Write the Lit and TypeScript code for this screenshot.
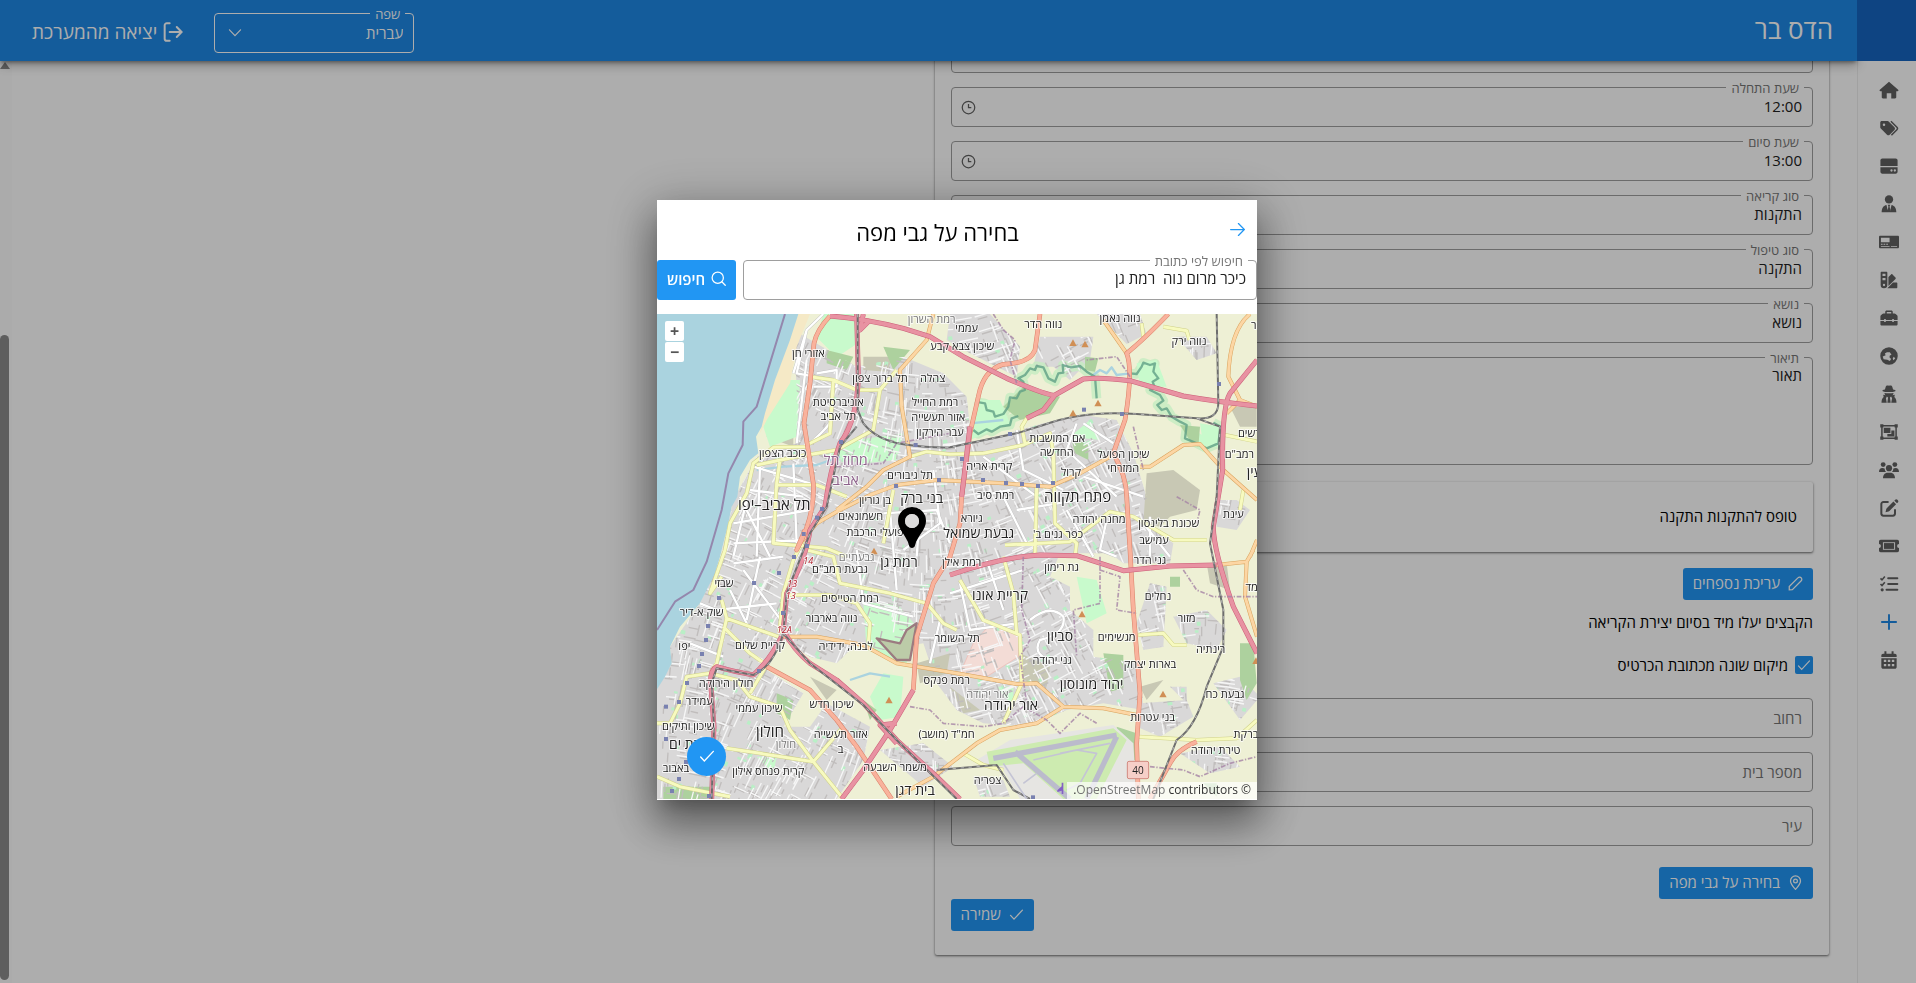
import { LitElement, html, css, svg, TemplateResult } from "lit";
import { customElement, property } from "lit/decorators.js";

/* ---------- icons ---------- */

const SOLID: Record<string, TemplateResult> = {
  home: svg`<path d="M12 2.2 23 11.6c.7.7.3 1.8-.7 1.8h-1.6v7.4c0 .8-.6 1.4-1.4 1.4h-4.6v-6.4h-5.4v6.4H4.7c-.8 0-1.4-.6-1.4-1.4v-7.4H1.7c-1 0-1.4-1.1-.7-1.8z"/>`,
  tags: svg`<path fill-rule="evenodd" d="M1.5 5.5c0-1 .8-1.8 1.8-1.8h7c.6 0 1.2.2 1.6.7l6.6 6.7c.9.9.9 2.3 0 3.2l-5.7 5.8c-.9.9-2.3.9-3.2 0l-7.4-7.5c-.4-.4-.7-1-.7-1.600zM6 6.700a1.500 1.500 0 1 0 0 3 1.500 1.500 0 0 0 0-3z"/><path d="m14.300 4 7.200 7.200c.8.8.8 2 0 2.800l-6.600 6.800" fill="none" stroke="currentColor" stroke-width="1.800"/>`,
  drive: svg`<path d="M4 3h16c1.400 0 2.300 1 2.300 2.300V12H1.700V5.300C1.700 4 2.600 3 4 3z"/><path fill-rule="evenodd" d="M1.700 13.600h20.600V19c0 1.300-1 2.300-2.300 2.300H4c-1.300 0-2.300-1-2.300-2.300zM15 16a1.400 1.400 0 1 0 0 2.800A1.400 1.400 0 0 0 15 16zm4 0a1.400 1.400 0 1 0 0 2.800 1.400 1.400 0 0 0 0-2.800z"/>`,
  tie: svg`<circle cx="12" cy="6.500" r="5"/><path d="M9 13.200 11 22H3.200c0-4.500 1.800-8 5.800-8.800zM15 13.200 13 22h7.800c0-4.500-1.800-8-5.800-8.800zM10.500 13h3l-.8 2 1 5.200L12 22.500l-1.700-2.300 1-5.200z"/>`,
  card: svg`<path fill-rule="evenodd" d="M1.500 4.500h21c1 0 1.500.7 1.500 1.500v12c0 .9-.6 1.500-1.500 1.500h-21C.6 19.500 0 18.900 0 18V6c0-.8.6-1.500 1.500-1.500zM2.300 6.800v5.400h10.400V6.800zM2.300 14v1.200h2V14zm3.200 0v1.200h2V14zm3.200 0v1.200h2V14zm-6.400 2.800v1h10.400v-1zm12 0v1h7.400v-1z"/>`,
  swatch: svg`<path fill-rule="evenodd" d="M2 3.200C2 2.500 2.500 2 3.200 2h5.600c.7 0 1.200.5 1.200 1.200V18a4 4 0 0 1-8 0zm2.200 1.300v2.700h3.600V4.500zm0 5v2.700h3.600V9.500zM6 16.600a1.400 1.400 0 1 0 0 2.800 1.400 1.400 0 0 0 0-2.800z"/><path d="m11.300 8.500 3.200-3.200c.5-.5 1.200-.5 1.700 0l3.600 3.700c.5.500.5 1.200 0 1.700l-8.500 8.600z"/><path d="M16.800 15h4c.7 0 1.200.5 1.200 1.200v4.600c0 .7-.5 1.200-1.200 1.200H10z"/>`,
  tools: svg`<path fill-rule="evenodd" d="M7.500 6.500V4.600c0-1 .7-1.700 1.700-1.700h5.600c1 0 1.700.7 1.700 1.700v1.900h2c.6 0 1.100.2 1.500.6l1.700 1.700c.4.400.6.900.6 1.500v4h-4.500v-1h-1.900v1H8.100v-1H6.200v1H1.700v-4c0-.6.200-1.100.6-1.500L4 7.100c.4-.4.900-.6 1.500-.6zm1.800 0h5.400V4.700H9.300z"/><path d="M1.700 15.500h4.500v1.300h1.900v-1.300h7.800v1.300h1.900v-1.300h4.500v4c0 .9-.7 1.600-1.600 1.600H3.300c-.9 0-1.600-.7-1.600-1.600z"/>`,
  globe: svg`<path fill-rule="evenodd" d="M12 1.500a10.500 10.500 0 1 1 0 21 10.500 10.500 0 0 1 0-21zM9.500 7.500 7 9l1 2-3.500 1.600 1 3.400 4.500.5 3 1.500 1.500-2.500-2-2 .5-2 2-1-2-3zM17.800 13l-1.300 1.600.6 2.400 2.400-2z"/>`,
  secret: svg`<path d="M8 3.500C8.600 2 9.500 1.500 12 2c2.500-.5 3.400 0 4 1.500l.9 3C18.900 7 20 7.400 20 8c0 1-3.500 1.700-8 1.700S4 9 4 8c0-.6 1.100-1 3.100-1.500z"/><path d="M6.500 10.800c3.200.5 7.800.5 11 0-.2 1.400-.8 2.200-1.700 2.700L19 13l-.6 2.600c1.700 1.200 2.600 3.400 2.600 6.900h-6.300l1-5.500-1.200-2-1.400 1.200.9 6.300h-4l.9-6.300L9.500 15l-1.200 2 1 5.500H3c0-3.500.9-5.700 2.600-6.900L5 13l3.200.5c-.9-.5-1.500-1.300-1.700-2.700z"/>`,
  group: svg`<path d="M3.500 4.600h17v14.800h-17z" fill="none" stroke="currentColor" stroke-width="1.800"/><path d="M1.500 2.700h3.800v3.800H1.500zM18.700 2.700h3.800v3.800h-3.800zM1.500 17.500h3.800v3.800H1.500zM18.700 17.500h3.800v3.800h-3.800zM5.700 7h8v6.300h-8zM14.800 10.300h3.700v7H10v-2.800h4.800z"/>`,
  users: svg`<circle cx="5" cy="5.500" r="2.900"/><circle cx="19" cy="5.500" r="2.900"/><circle cx="12" cy="9.800" r="3.700"/><path d="M0 14.300c0-3 1.500-4.800 4-4.800 1.300 0 2.300.3 3 .9-.2 1.600.3 3 1.500 3.900zM24 14.300c0-3-1.500-4.800-4-4.800-1.300 0-2.300.3-3 .9.200 1.600-.3 3-1.500 3.900zM4.800 21.800c0-4 2.300-6.500 5.500-6.500h3.400c3.200 0 5.500 2.500 5.500 6.500z"/>`,
  edit: svg`<path d="M11.500 4.800H5.300A2.500 2.500 0 0 0 2.800 7.300v11.400a2.500 2.500 0 0 0 2.500 2.500h11.400a2.500 2.500 0 0 0 2.500-2.500v-5.200" fill="none" stroke="currentColor" stroke-width="2.400"/><path d="m17.300 4.300 3.200 3.200-8 8c-.3.3-.6.5-1 .6l-3.700.9.9-3.700c.1-.4.300-.7.600-1zM18.400 3.200l1-1c.8-.8 2-.8 2.700 0l.5.500c.8.800.8 2 0 2.700l-1 1z"/>`,
  ticket: svg`<path fill-rule="evenodd" d="M2 4.500h20c1.100 0 2 .9 2 2v3.200a2.300 2.300 0 0 0 0 4.600v3.200c0 1.100-.9 2-2 2H2c-1.100 0-2-.9-2-2v-3.200a2.300 2.300 0 0 0 0-4.600V6.500c0-1.100.9-2 2-2zm2.700 2.900v9.200h14.600V7.400z"/><path d="M5.900 8.500h12.200v7H5.900z"/>`,
  list: svg`<path d="M11 5.200h11M11 12h11M9 19h13" fill="none" stroke="currentColor" stroke-width="2.400" stroke-linecap="round"/><path d="m1.800 5.200 1.800 1.900 3.400-4M1.800 12l1.800 1.900 3.400-4" fill="none" stroke="currentColor" stroke-width="1.900"/><circle cx="3.800" cy="19" r="1.900"/>`,
  plus: svg`<path d="M12 3.500v17M3.500 12h17" fill="none" stroke="currentColor" stroke-width="2.300" stroke-linecap="round"/>`,
  calendar: svg`<path d="M6.500 1.500h2.400v3h6.200v-3h2.400v3H19c1.200 0 2.200 1 2.200 2.200v1.800H2.800V6.700c0-1.200 1-2.200 2.200-2.200h1.500z"/><path fill-rule="evenodd" d="M2.800 9.800h18.400v10.500c0 1.200-1 2.200-2.200 2.200H5c-1.200 0-2.200-1-2.200-2.200zm3 2v2.700h2.900v-2.700zm4.800 0v2.700h2.900v-2.700zm4.800 0v2.700h2.900v-2.700zm-9.600 5v2.700h2.900v-2.700zm4.800 0v2.700h2.900v-2.700zm4.800 0v2.700h2.900v-2.700z"/>`,
};

const LINE: Record<string, TemplateResult> = {
  clock: svg`<circle cx="12" cy="12" r="10"/><path d="M12 6.500V12h4.500"/>`,
  chevron: svg`<path d="m2.500 6.500 9.500 10 9.500-10"/>`,
  logout: svg`<path d="M8 1.500H4.500a2.500 2.500 0 0 0-2.500 2.500v16a2.500 2.500 0 0 0 2.500 2.500H8M8 12h14M16.500 6l5.800 6-5.800 6"/>`,
  arrow: svg`<path d="M1 12h22M13.500 2.500 23 12l-9.500 9.500"/>`,
  search: svg`<circle cx="10.800" cy="10.800" r="9"/><path d="m17.300 17.300 5.500 5.500"/>`,
  pencil: svg`<path d="M2 22v-5.200L15.800 3c2-2.200 4.200-1.400 5.200-.2 1.200 1.200 1.800 3.300-.2 5.300L7 21.800z"/>`,
  marker: svg`<path d="M12 23C7 17.500 4 13.500 4 9.500a8 8 0 0 1 16 0c0 4-3 8-8 13.500z"/><circle cx="12" cy="9.500" r="3"/>`,
  check: svg`<path d="m2.500 13.500 5.500 6L21.500 5"/>`,
};

const solid = (name: string) =>
  html`<svg class="solid" viewBox="0 0 24 24" aria-hidden="true">${SOLID[name]}</svg>`;
const line = (name: string) =>
  html`<svg class="line" viewBox="0 0 24 24" aria-hidden="true">${LINE[name]}</svg>`;

/* ---------- outlined text field ---------- */

const UI_FONT = css`"Open Sans", "Noto Sans", "Liberation Sans", sans-serif`;

@customElement("outlined-field")
export class OutlinedField extends LitElement {
  @property() label = "";
  @property() value = "";
  @property() icon = "";
  @property({ type: Boolean }) multiline = false;
  @property({ type: Boolean }) placeholder = false;

  static styles = css`
    :host {
      display: block;
    }
    .box {
      position: relative;
      display: flex;
      align-items: center;
      box-sizing: border-box;
      min-height: 40px;
      border: 1px solid #9e9e9e;
      border-radius: 4px;
    }
    label {
      position: absolute;
      top: -8px;
      right: 8px;
      padding: 0 5px;
      background: #fff;
      color: #757575;
      font: 13px/16px ${UI_FONT};
    }
    input,
    textarea {
      flex: 1;
      min-width: 0;
      box-sizing: border-box;
      margin: 0;
      padding: 0 10px;
      border: 0;
      outline: 0;
      background: none;
      color: #212121;
      font: 15px/20px ${UI_FONT};
      resize: none;
    }
    input {
      height: 38px;
    }
    label + input {
      padding-bottom: 3px;
    }
    textarea {
      height: 106px;
      padding-top: 7px;
    }
    input::placeholder {
      color: #757575;
      opacity: 1;
    }
    .line {
      width: 15px;
      height: 15px;
      margin-left: 9px;
      fill: none;
      stroke: #616161;
      stroke-width: 2;
    }
  `;

  render() {
    const floating = this.label && !this.placeholder;
    return html`<div class="box">
      ${floating ? html`<label for="control">${this.label}</label>` : ""}
      ${this.multiline
        ? html`<textarea id="control" .value=${this.value}></textarea>`
        : html`<input
            id="control"
            type="text"
            aria-label=${this.label}
            .value=${this.value}
            placeholder=${this.placeholder ? this.label : ""}
          />`}
      ${this.icon ? line(this.icon) : ""}
    </div>`;
  }
}

/* ---------- street map ---------- */

type Label = [text: string, x: number, y: number, kind?: string];

const LABELS: Label[] = [
  ["אזורי חן", 475, 128], ["רמת השרון", 845, 28, "dim"], ["תל ברוך צפון", 690, 205],
  ["צהלה", 848, 203], ["אוניברסיטת", 565, 275], ["תל אביב", 565, 318],
  ["רמת החייל", 855, 275], ["אזור תעשייה", 865, 322], ["עבר הירקון", 870, 365],
  ["כוכב הצפון", 398, 430], ["מחוז תל", 587, 452, "region"], ["אביב", 587, 512, "region"],
  ["תל גיבורים", 780, 495], ["בן גוריון", 675, 570], ["בני ברק", 815, 568, "town"],
  ["תל אביב–יפו", 373, 587, "city"], ["חשמונאים", 632, 617], ["פועלי הרכבת", 675, 665],
  ["גבעת שמואל", 986, 673, "town"], ["גבעתיים", 620, 742, "dim"], ["עממי", 950, 55],
  ["שיכון צבא קבע", 937, 108], ["נווה הדר", 1180, 42], ["נווה נאמן", 1410, 25],
  ["נווה ירק", 1617, 93], ["אם המושבות", 1222, 383], ["החדשה", 1220, 427],
  ["שיכון הפועל", 1420, 432], ["המזרחי", 1420, 475], ["קרית אריה", 1018, 468],
  ["קרול", 1263, 485], ["רמת סיב", 1037, 555], ["פתח תקווה", 1283, 563, "city"],
  ["גיורא", 965, 625], ["מחנה יהודה", 1347, 628], ["שכונת בלינסון", 1556, 638],
  ["כפר גנים ב'", 1224, 673], ["עמישב", 1512, 690], ["עינת", 1750, 612],
  ["רמב\"ם", 1768, 433], ["קדשים", 1808, 370], ["העין", 1826, 488, "town"],
  ["מזור", 1830, 45], ["גני הדר", 1500, 750], ["גבעת רמב\"ם", 570, 776],
  ["רמת גן", 747, 760, "town"], ["14", 475, 750, "exit"], ["13", 427, 818, "exit"],
  ["13", 422, 855, "exit"], ["12A", 403, 957, "exit"], ["שבזי", 222, 818],
  ["שוק א-דיר", 155, 905], ["רמת הטייסים", 600, 864], ["נווה בארבור", 545, 924],
  ["לבנה, ידידיה", 587, 1008], ["קריית שלום", 330, 1005], ["יפו", 103, 1008],
  ["חולון הירוקה", 228, 1120], ["עמידר", 148, 1172], ["שיכון ותיקים", 115, 1248],
  ["שיכון עממי", 327, 1195], ["שיכון חדש", 545, 1182], ["אזור תעשייה", 572, 1272],
  ["ב", 572, 1317], ["חולון", 360, 1268, "city"], ["חולון", 408, 1303, "dim"],
  ["קרית פנחס אילון", 355, 1382], ["בת ים", 105, 1305, "town"], ["באבוב", 78, 1375],
  ["משמר השבעה", 735, 1370], ["בית דגן", 795, 1443, "town"], ["תל השומר", 922, 983],
  ["רמת פנקס", 890, 1110], ["חמ\"ד (מושב)", 890, 1273], ["רמת אילן", 935, 757],
  ["גת רימון", 1235, 770], ["קריית אונו", 1050, 858, "town"], ["סביון", 1230, 980, "town"],
  ["נחלים", 1524, 858], ["מזור", 1610, 925], ["מגשימים", 1400, 980],
  ["רינתיה", 1682, 1018], ["גני יהודה", 1207, 1050], ["בארות יצחק", 1500, 1062],
  ["יהוד מונוסון", 1325, 1125, "town"], ["אור יהודה", 1012, 1153, "dim"],
  ["אור יהודה", 1083, 1187, "town"], ["גבעת כח", 1725, 1153], ["בני עטרות", 1508, 1222],
  ["ברקת", 1788, 1273], ["טירת יהודה", 1697, 1320], ["צפריה", 1013, 1410],
  ["שדה חמד", 1850, 832],
];

const CITY_AREA =
  "M430 60 620 170 760 140 880 190 950 260 965 400 1180 340 1300 315 1400 330 1450 430 1490 560 1480 640 1570 700 1560 760 1420 760 1380 730 1230 730 1200 800 1260 830 1260 900 1330 960 1330 1040 1470 1060 1480 1200 1360 1180 1250 1200 1130 1250 1000 1240 920 1200 860 1120 820 1000 700 1020 620 1000 560 1060 480 1040 400 990 350 1080 460 1150 400 1250 480 1250 530 1180 660 1250 640 1350 560 1467 21 1467 21 1135 65 1060 60 1010 150 880 210 750 250 570 320 440 440 400 440 230z";
const TOWN_AREAS =
  "M900 12H1020L1110 110 1100 200 960 130 890 90z M1170 80h160l-10 70-60 60-50-40-60 0z M1340 12h130l20 60-60 30z M1580 80h90l30 50-60 20z M1700 570l60 0 40 30-40 60-60-10z M1500 820l50 10-10 180-60 10-20-80z M1570 920l100-20 60 60-30 60-90-20z M1470 1180l140-10 20 50-100 60-70-30z M1690 1120l80-20 60 60-60 70z M1590 1330l120-20 60 60-90 20z M690 1320l130-20 90 70-90 60z M970 1400l90 10 20 50h-90z M1560 1130l50 0 0 50z";
const GREEN_AREAS =
  "M400 210h50l-10 170-80 30-20-60z M620 390 760 370 740 450 640 460 520 440z M640 880h100l60 70-30 110-120-40z M700 1090l60 10-10 120-60 10-30-70z M1460 160l60-10 30 80-80 0z M1600 340l80 50-20 20z M990 270l60 0 30 70-120 50z M1320 330l30 60-90 -10z M1650 340l60 10 0 60-50 0z M1040 1130l50 0 0 60z M320 1340l60 0-10 50z M1280 800l60 10 30 100-60 30z M520 12h100v90l-60 40-60-60z";
const FOREST_AREAS =
  "M1120 230l110 30-30 50-90 20-50-40z M1590 345l60 5-5 60-20-10z M530 120l80 20-20 40-60-20z M1265 390l50 10 0 50-40-20z M1360 1030l60 5v100l-40 10z M1400 1250l60 20v80l-50 0z M700 110l80 10-50 60z M380 1150l50 20-10 60-40-20z M640 1170l40 30-20 30z M1770 1000l40 0 10 120-30 50-20-60z M1660 1420l40 0v40z M40 1430h140v37H40z M1305 140l40 5-10 40-30-5z M1560 800l30 0 0 30-30 0z";
const SCRUB_AREAS =
  "M1490 490 1570 480 1650 540 1640 600 1560 620 1530 650 1480 640z M640 140h90l-20 45-70-5z M370 260h60v150l-80-30z M1110 1030l90 40-10 60-70-20z M1470 1130l70-20-50 60z M900 1130l90 70-50 10z M1670 760l60 0 10 80-60-20z M800 1060l100-30-10 60-80 30z M1740 290l80 0v60l-50 0z M480 1100l80 40-30 30z";
const RESERVE =
  "M970 360 985 372 1010 358 1025 365 1050 350 1080 345 1085 325 1105 318 M975 275 1005 280 1010 300 1030 305 1035 320 1060 312 1075 290 1080 262 1100 265 1110 245 1125 240 1120 215 1105 205 1125 195 1140 175 1155 180 1160 168 1180 172 1195 205 1215 215 1225 190 1240 188 1238 165 1262 172 1290 168 1310 185 1335 200 1340 265 M1440 190 1460 192 1475 170 1480 158 1500 165 1515 160 1510 185 1525 205 1508 215 1515 235 1500 240 1530 255 1540 272 1522 285 1535 300 1550 295 1565 320 1590 335 1610 345 1605 385 1640 400 1670 415 1705 400 1712 350 1690 338";

const MOTORWAYS = [
  "M620 12 625 200Q622 330 570 400Q540 480 525 590L480 660Q470 740 410 850L400 960Q430 1020 480 1060L560 1110 640 1180 740 1290 860 1400 930 1467",
  "M395 980Q360 1050 310 1095 250 1085 200 1070 180 1080 182 1120L192 1250 185 1467",
  "M540 18Q640 25 760 55L840 80 940 140 1070 205Q1200 260 1215 255L1300 207Q1350 200 1440 212L1600 258Q1700 275 1821 288",
  "M640 12 630 60 660 30",
  "M1821 150 1740 250Q1715 290 1718 480L1690 650Q1690 720 1750 890L1821 1030",
  "M1215 255 1180 300 1130 325",
  "M900 795Q1060 740 1170 735L1280 737 1420 782 1560 768 1700 765",
  "M790 1140 720 1260 640 1380 575 1467",
  "M740 1240 690 1245 740 1300",
  "M960 350 935 560",
];
const TRUNKS = [
  "M540 18Q500 60 492 100L480 220 462 340 490 520Q495 620 440 720L465 660",
  "M1170 12 1155 120Q1140 160 1060 163 1000 180 985 260L960 370 935 560 930 640 900 740 850 820 800 980 790 1140",
  "M1555 12Q1480 90 1430 130 1450 180 1425 330L1390 430Q1430 500 1430 560L1440 720 1450 900 1470 1150 1460 1300 1465 1467",
  "M350 1070 480 1140 560 1230 620 1310 660 1370 725 1467",
  "M1640 1295Q1580 1320 1560 1360L1500 1467",
];
const PRIMARIES = [
  "M850 12 830 90 750 180 755 290 780 440 700 480 650 530 560 600",
  "M450 700 500 640 560 605 660 555 740 525 860 510 1060 520 1200 530 1290 490 1380 440 M1470 470H1500L1600 405 1650 402 1720 480 1821 570",
  "M1360 30 1430 130", "M1800 12Q1740 60 1735 200L1770 270 1730 310 M1770 270 1821 290",
  "M400 980H500L640 1005 740 1060 920 1090 1100 1122 1160 1120 1240 1190 1360 1195 1460 1215",
  "M1240 1190 1160 1240 1050 1260 980 1300 850 1400 740 1460",
  "M1700 765 1790 755 1810 720 M1790 755 1785 860 1821 980 M1821 690 1800 740",
];
const SECONDARIES = [
  "M480 410 370 412 310 460 290 550 240 640 225 720 180 850 215 800",
  "M480 200 550 210 620 240 690 240 740 180 M550 210 540 370 470 405 M690 240 670 360 560 420 440 440 320 465",
  "M390 450 380 520 370 700 530 715 590 740 M380 525 500 525 590 560",
  "M460 690 430 750 400 850 388 970 M215 870 230 925 300 950 385 980 M230 925 200 1060 180 1090 110 1100 90 1180 60 1240 21 1240",
  "M220 950 300 1030 350 1065 300 1150 M180 1090 260 1110 300 1160 390 1190 420 1260 490 1355 580 1467 M230 1315 330 1330 490 1355 580 1250",
  "M21 1400 90 1430 240 1460 M400 855H540L620 880 660 940 655 1000 M470 720 550 740 570 820 720 850 830 880 880 940 920 960",
  "M780 440 830 425 900 433 1000 430 1120 405 1200 370 1210 430 1212 520 1215 640 1280 700 1275 740",
  "M1130 325 1115 350 1125 400 M1160 530 1155 740 M1065 705 1260 695 1380 605 1450 620 1570 690 1670 690",
  "M1475 40 1480 80 M1540 50 1610 62 1618 90 M930 810 1000 930 1110 975 1115 1120 1060 1240 M1060 740 1090 850 1100 970",
  "M1465 975 1540 970 1570 1005 1610 1005 M1465 1280 1640 1290 1760 1285 1821 1230 M1725 375 1821 395 M730 540 700 700 M1780 540 1770 600",
  "M940 1330 1000 1365 1060 1380",
];
const SURFACE_RAILS = [
  "M640 340Q680 390 760 403 850 415 900 412L1100 370 1180 345Q1300 300 1460 312L1640 325Q1705 330 1705 280L1700 12",
  "M1640 325 1710 350 1700 560 1680 700 1720 900 1720 1010 1670 1130Q1640 1250 1580 1290L1510 1467",
  "M860 1380 1040 1365 1090 1440 1140 1467",
];
const MEDIAN_RAILS = [
  "M623 12V300L640 340 M620 350 570 410 530 590 480 670 410 850 400 970 480 1060 640 1185 740 1290 920 1467",
  "M400 970Q370 1070 310 1095L200 1075 185 1120 192 1250 185 1467",
];
const BORDERS = [
  "M1030 12 1060 60 1095 90 1080 150 1100 220", "M1600 780 1640 840 1690 860 1821 860",
  "M1120 740 1115 900 1140 990 1110 1040 1130 1180", "M780 1190 840 1200 880 1240 1000 1250 1060 1240 1120 1190 1190 1230 1230 1270 1290 1210 1340 1240",
  "M1350 740 1350 880 1270 900 1280 1040", "M1500 1370 1600 1380 1650 1400 1740 1360 1821 1340",
  "M1440 200 1400 140 1310 150", "M1450 350 1480 480 M1580 560 1650 600 1640 640",
  "M560 470 700 460 740 400 900 370", "M1350 780 1410 800 1400 900 1460 910",
];
const MINOR_STREETS = [
  "M430 190 470 60 520 12 M470 60 440 190 550 210 M500 190 560 180V230H490 M470 150 440 400 M480 400Q560 330 540 320",
  "M270 560 360 740 M310 470 480 520 M300 540 460 560 M250 640 480 600 M290 570 250 740 M330 470 320 740 M430 460 440 700 M250 700 470 690",
  "M250 760 400 740 M200 900 380 880 M240 840 300 960 M330 740 290 930 M150 880 200 900 M280 780 400 940 M120 1000 220 1040",
  "M700 610 860 600 900 700 M720 600 740 840 M810 610 800 740 M850 480 870 640 760 720 M620 720 640 880 790 920",
  "M1000 440 1160 560 M1050 540 1130 700 M980 560 1080 540 M1100 360 1120 480 1240 540 M1300 340 1390 400 M1280 340 1250 420 1400 560 M1300 500 1480 560 M1250 600 1330 740 M1100 600 1350 560",
  "M1480 640 1560 740 M1500 620 1500 740 M1370 630 1350 720 1400 740 M900 850 1120 780 M930 820 960 960 1100 940 M1010 750 1060 900 M870 930 840 1060",
  "M1140 930Q1200 880 1240 920 1250 970 1170 990 1140 1040 1230 1060 1260 1030M1180 870Q1130 860 1150 800 M1160 780H1220V860H1130",
  "M1220 1100Q1260 1030 1390 1060 1430 1120 1390 1190 M1230 1120H1400 M1270 1050V1180 M1310 1045V1190 M1350 1050V1190 M1220 1150H1400 M1220 1080H1400",
  "M1440 800 1530 820 1540 940 M1460 890H1530 M1530 940V1020L1460 1030 M1600 1000V930L1640 910 1690 950 M1720 1200 1740 1270 M1590 1360 1700 1300",
  "M60 1170 160 1300 240 1460 M21 1300 190 1320 M90 1180 230 1210 390 1190 M230 1240 240 1420 M230 1420H600 M420 1260 600 1420 M480 1260 560 1200 660 1290 M500 1300 600 1240 M440 1320 560 1340",
  "M40 1130 70 1220 M100 940 140 1030 90 1100 M230 1060 260 980 M280 1180 260 1330 M340 1200 330 1320 M640 1400 680 1330 830 1410",
  "M880 150 930 180 M960 140Q970 90 1020 80 M1020 80Q1060 70 1070 120 L1040 160",
  "M580 250 600 330 M700 260 760 300 M720 330 800 350 M780 200 900 240 M860 240 900 400 M680 330 720 370 M500 460 520 560 M400 470 410 700 M340 620 470 640",
];
const STATIONS = [
  [573, 396], [797, 405], [867, 510], [738, 528], [516, 597], [501, 623], [461, 672], [471, 708],
  [432, 741], [387, 789], [312, 819], [207, 864], [399, 909], [174, 948], [168, 990], [156, 1032],
  [147, 1068], [327, 1083], [111, 1119], [87, 1176], [48, 1190], [48, 1287], [108, 1356], [87, 1407],
  [66, 1443], [177, 1458], [936, 447], [999, 510], [1068, 519], [1116, 522], [1164, 528], [1209, 519],
  [1080, 372], [1302, 299], [1416, 312], [1707, 222], [1149, 1462],
];
const PEAKS = [
  [1269, 98], [1305, 102], [1344, 279], [1269, 309], [672, 723], [1296, 912], [717, 1170], [1539, 1152], [1818, 1052],
];

/* Repeatable pseudo-random texture of blocks, side streets and gardens. */
function cityTexture() {
  let seed = 71;
  const next = () => (seed = (seed * 16807) % 2147483647) / 2147483647;
  let lanes = "";
  let blocks = "";
  let gardens = "";
  for (let i = 0; i < 3200; i++) {
    const x = Math.round(30 + next() * 1780);
    const y = Math.round(20 + next() * 1440);
    const a = Math.sin(x / 260) * 0.5 + (next() > 0.5 ? 1.57 : 0);
    const l = 25 + next() * 50;
    const dx = Math.round(Math.cos(a) * l);
    const dy = Math.round(Math.sin(a) * l);
    blocks += `M${x + 9} ${y + 7}l${Math.round(dx / 2)} ${Math.round(dy / 2)}`;
    if (i % 2 === 0) lanes += `M${x} ${y}l${dx} ${dy}`;
    if (i % 7 === 0) gardens += `M${x} ${y - 8}l${Math.round(dx / 5)} ${Math.round(dy / 5)}`;
  }
  return { lanes, blocks, gardens };
}
const TEXTURE = cityTexture();

@customElement("street-map")
export class StreetMap extends LitElement {
  static styles = css`
    :host {
      display: block;
      overflow: hidden;
    }
    svg {
      display: block;
      width: 100%;
      height: 100%;
      background: #eef0d5;
    }
    path {
      fill: none;
      stroke-linejoin: round;
    }
    .sea { fill: #aad3df; }
    .sand { fill: #f5e9c6; }
    .built { fill: #d9d8d8; }
    .green { fill: #c8facc; }
    .meadow { fill: #cdebb0; }
    .forest { fill: #add19e; }
    .scrub { fill: #c8c8b4; }
    .airport { fill: #e6e5e2; }
    .base { fill: #f3dcd6; stroke: #f0b8b0; stroke-width: 2; }
    .lanes { stroke: #f6f6f6; stroke-width: 4; }
    .blocks { stroke: #c0bdbc; stroke-width: 4; }
    .gardens { stroke: #b9efc6; stroke-width: 11; }
    .minor-edge { stroke: #bcbcbc; stroke-width: 9; }
    .minor { stroke: #fff; stroke-width: 7; }
    .secondary-edge { stroke: #cfd08a; stroke-width: 12; }
    .secondary { stroke: #f7fabf; stroke-width: 9; }
    .primary-edge { stroke: #d8a25c; stroke-width: 12; }
    .primary { stroke: #fcd6a4; stroke-width: 9; }
    .trunk-edge { stroke: #d98068; stroke-width: 14; }
    .trunk { stroke: #f9b29c; stroke-width: 11; }
    .motorway-edge { stroke: #cb5f78; stroke-width: 15; }
    .motorway { stroke: #e892a2; stroke-width: 12; }
    .rail { stroke: #6d6d6d; stroke-width: 6; }
    .rail-dash { stroke: #d8d8d8; stroke-width: 2; stroke-dasharray: 10 14; }
    .border { stroke: #a583a5; stroke-width: 5; stroke-dasharray: 14 5 4 5; opacity: 0.8; }
    .sea-border { stroke: #9487ad; stroke-width: 6; }
    .river { stroke: #aad3df; stroke-width: 7; }
    .bank { stroke: #c4ecc0; stroke-width: 28; opacity: 0.8; }
    .reserve { stroke: #5f9f84; stroke-width: 7; opacity: 0.8; }
    .zoo { fill: #bccba8; stroke: #9b7b80; stroke-width: 7; }
    .runway { stroke: #bbbbcc; stroke-width: 16; }
    .taxiway { stroke: #c4c4d4; stroke-width: 5; }
    .station { fill: #7981b0; }
    .peak { fill: #d08f55; }
    text {
      fill: #222;
      font: 33px "Open Sans", "Noto Sans", "Liberation Sans", sans-serif;
      text-anchor: middle;
      direction: rtl;
      paint-order: stroke;
      stroke: rgba(255, 255, 255, 0.75);
      stroke-width: 6px;
      stroke-linejoin: round;
    }
    .town { font-size: 42px; }
    .city { font-size: 45px; }
    .dim { fill: #777; }
    .region { fill: #8d618b; font-size: 42px; }
    .exit { fill: #b0202c; font-size: 27px; font-style: italic; }
    .shield { fill: #f6cfc8; stroke: #d28a80; stroke-width: 3; }
    .shield-text { font-size: 30px; stroke: none; }
    .plane { fill: #8461c4; }
  `;

  private road(kind: string, paths: string[]) {
    const d = paths.join(" ");
    return svg`<path class="${kind}-edge" d=${d}></path><path class=${kind} d=${d}></path>`;
  }

  render() {
    const rails = [...MEDIAN_RAILS, ...SURFACE_RAILS].join(" ");
    return html`<svg viewBox="21 12 1800 1455" preserveAspectRatio="xMidYMid slice" role="img" aria-label="מפה">
      <defs>
        <clipPath id="built"><path d=${CITY_AREA + " " + TOWN_AREAS}></path></clipPath>
      </defs>
      <path class="built" d=${CITY_AREA + " " + TOWN_AREAS}></path>
      <path class="scrub" d=${SCRUB_AREAS}></path>
      <path class="bank" d=${RESERVE}></path>
      <path class="green" d=${GREEN_AREAS}></path>
      <path class="forest" d=${FOREST_AREAS}></path>
      <path class="base" d="M970 1000 1010 955 1050 950 1110 980 1105 1040 1010 1100 930 1090z"></path>
      <path class="airport" d="M980 1350 1080 1290 1390 1245 1450 1300 1460 1467H1110L1060 1380z"></path>
      <path class="meadow" d="M1010 1325 1390 1255 1430 1290 1340 1467H1240L1120 1360 1020 1370z"></path>
      <g clip-path="url(#built)">
        <path class="gardens" d=${TEXTURE.gardens}></path>
        <path class="blocks" d=${TEXTURE.blocks}></path>
        <path class="lanes" d=${TEXTURE.lanes}></path>
      </g>
      <path class="sand" d="M445 12H480L440 110 420 220 350 330 330 370 345 300 375 210z"></path>
      <path class="sea" d="M21 12H445L420 90 375 210 345 310 335 350 318 380 325 430 300 450 270 500 262 560 245 590 235 640 210 740 195 790 150 880 90 950 60 1010 65 1060 45 1100 21 1138z"></path>
      <path class="sea-border" d="M405 12 320 290 280 335 278 405 235 490 215 600 170 755 130 840 75 875 21 960"></path>
      <path class="river" d="M320 480 400 470 500 465 570 440 M1330 195 1350 180 1370 190 1385 172 1400 195 1440 190 M960 340 1060 330 M600 1110 660 1090 720 1100"></path>
      <path class="reserve" d=${RESERVE}></path>
      <path class="zoo" d="M680 985 750 1000 770 960 800 940 780 1050 740 1050z"></path>
      ${this.road("minor", MINOR_STREETS)}
      ${this.road("secondary", SECONDARIES)}
      ${this.road("primary", PRIMARIES)}
      ${this.road("trunk", TRUNKS)}
      ${this.road("motorway", MOTORWAYS)}
      <path class="border" d=${BORDERS.join(" ")}></path>
      <path class="rail" d=${rails}></path>
      <path class="rail-dash" d=${rails}></path>
      <path class="runway" d="M1030 1345 1400 1275 M1095 1325 1260 1467 M1400 1280 1310 1467"></path>
      <path class="taxiway" d="M1150 1350 1280 1320 1340 1330 1290 1420 1250 1440 M1380 1300 1230 1330 M1060 1360 1130 1467 M1160 1390 1120 1420"></path>
      ${STATIONS.map(([x, y]) => svg`<rect class="station" x=${x - 6} y=${y - 6} width="12" height="12"></rect>`)}
      ${PEAKS.map(([x, y]) => svg`<path class="peak" d="M${x - 11} ${y + 10}h22l-11-20z"></path>`)}
      ${LABELS.map(([t, x, y, kind]) => svg`<text class=${kind ?? ""} x=${x} y=${y + 12}>${t}</text>`)}
      <rect class="shield" x="1432" y="1354" width="64" height="52" rx="5"></rect>
      <text class="shield-text" x="1464" y="1391">40</text>
      <path class="plane" d="M1240 1418v34h-5v-10l-13 4v-5l13-12v-11z"></path>
    </svg>`;
  }
}

/* ---------- application ---------- */

const NAV: [icon: string, label: string][] = [
  ["home", "בית"], ["tags", "תגיות"], ["drive", "ציוד"], ["tie", "לקוחות"],
  ["card", "כרטיסים"], ["swatch", "קטלוג"], ["tools", "כלים"], ["globe", "אזורים"],
  ["secret", "סוכנים"], ["group", "קבוצות"], ["users", "משתמשים"], ["edit", "טפסים"],
  ["ticket", "קריאות"], ["list", "משימות"], ["plus", "חדש"], ["calendar", "יומן"],
];

@customElement("app-root")
export class AppRoot extends LitElement {
  static styles = css`
    :host {
      display: block;
      height: 100vh;
      overflow: hidden;
      background: #fff;
      color: #000;
      font: 15px/20px ${UI_FONT};
    }
    .shell {
      display: grid;
      grid-template: 61px minmax(0, 1fr) / 59px minmax(0, 1fr);
      height: 100%;
    }
    svg { display: block; flex: none; }
    .solid { fill: currentColor; }
    .line { fill: none; stroke: currentColor; stroke-width: 2; stroke-linecap: round; }
    button, select { font: inherit; cursor: pointer; }

    .brand {
      z-index: 2;
      background: #1565c0;
    }
    header {
      display: flex;
      align-items: center;
      gap: 31px;
      padding: 0 24px 0 32px;
      background: #1e88e5;
      color: #fff;
      box-shadow: 0 2px 4px -1px rgba(0, 0, 0, 0.4), 0 4px 10px rgba(0, 0, 0, 0.3);
      z-index: 1;
    }
    h1 {
      flex: 1;
      margin: 0;
      padding-bottom: 4px;
      font-size: 26px;
      font-weight: 400;
      line-height: 32px;
    }
    .language {
      position: relative;
      display: flex;
      align-items: center;
      box-sizing: border-box;
      width: 200px;
      height: 40px;
      margin-top: 4px;
      border: 1px solid #fff;
      border-radius: 4px;
    }
    .language label {
      position: absolute;
      top: -8px;
      right: 8px;
      padding: 0 5px;
      background: #1e88e5;
      font-size: 13px;
      line-height: 16px;
    }
    .language select {
      width: 100%;
      height: 100%;
      padding: 0 10px;
      border: 0;
      background: none;
      color: #fff;
      appearance: none;
    }
    .language .line {
      position: absolute;
      left: 13px;
      width: 14px;
      height: 14px;
    }
    .logout {
      display: flex;
      align-items: center;
      gap: 6px;
      padding: 2px 0 0;
      border: 0;
      background: none;
      color: #fff;
      font-size: 19px;
      font-weight: 500;
      line-height: 24px;
    }
    .logout .line { width: 20px; height: 20px; stroke-width: 2.4; }

    nav {
      display: flex;
      flex-direction: column;
      align-items: center;
      gap: 18px;
      padding: 19px 0 0 3px;
      border-left: 1px solid #eee;
      color: #616161;
    }
    nav a { color: inherit; }
    nav a.active { color: #1e88e5; }
    nav svg { width: 20px; height: 20px; }

    .page {
      display: flex;
      min-width: 0;
      overflow: hidden;
    }
    main {
      flex: 1;
      display: flex;
      flex-direction: column;
      justify-content: flex-end;
      padding: 28px;
      overflow: hidden;
    }
    .scrollbar {
      width: 12px;
      display: flex;
      flex-direction: column;
      align-items: flex-end;
      background: #fcfcfc;
    }
    .scrollbar .up {
      border: 5px solid transparent;
      border-top-width: 0;
      border-bottom: 7px solid #8b8b8b;
      margin-top: 1px;
    }
    .scrollbar .thumb {
      width: 9px;
      height: 70%;
      margin: auto 0 3px;
      border-radius: 5px;
      background: #8b8b8b;
    }

    .card {
      box-sizing: border-box;
      width: 50%;
      padding: 16px 16px 24px;
      border-radius: 2px;
      box-shadow: 0 1px 3px rgba(0, 0, 0, 0.3), 0 1px 2px rgba(0, 0, 0, 0.35);
    }
    .fields {
      display: flex;
      flex-direction: column;
      gap: 14px;
    }
    .form-card {
      margin: 17px 0 16px;
      padding: 24px 16px 26px;
      border-radius: 2px;
      box-shadow: 0 1px 3px rgba(0, 0, 0, 0.3), 0 1px 2px rgba(0, 0, 0, 0.35);
    }
    .button {
      display: inline-flex;
      align-items: center;
      gap: 8px;
      height: 32px;
      padding: 0 10px 2px;
      border: 0;
      border-radius: 3px;
      background: #2196f3;
      color: #fff;
      font-weight: 500;
    }
    .button .line { width: 15px; height: 15px; }
    .hint { margin: 12px 0 24px; }
    .check {
      display: flex;
      align-items: center;
      gap: 7px;
      height: 18px;
      margin-bottom: 24px;
    }
    .check input {
      appearance: none;
      width: 18px;
      height: 18px;
      margin: 0;
      border-radius: 2px;
      background: #2196f3;
    }
    .tick {
      position: relative;
      display: flex;
    }
    .tick .line {
      position: absolute;
      inset: 2px;
      width: 14px;
      height: 14px;
      color: #fff;
      pointer-events: none;
    }
    .pick { margin-top: 21px; }
    .save {
      display: flex;
      justify-content: flex-end;
    }

    .scrim {
      position: fixed;
      inset: 0;
      z-index: 3;
      display: flex;
      align-items: center;
      justify-content: center;
      padding: 16px 2px 0 0;
      background: rgba(0, 0, 0, 0.32);
    }
    .dialog {
      display: flex;
      flex-direction: column;
      width: 600px;
      height: 600px;
      max-width: 100%;
      background: #fff;
      box-shadow: 0 11px 15px -7px rgba(0, 0, 0, 0.2), 0 24px 38px 3px rgba(0, 0, 0, 0.34),
        0 9px 46px 8px rgba(0, 0, 0, 0.22);
    }
    .dialog-head {
      display: flex;
      align-items: center;
      gap: 24px;
      height: 60px;
      padding: 0 12px;
    }
    .back {
      padding: 0;
      border: 0;
      background: none;
      color: #2196f3;
    }
    .back .line { width: 15px; height: 15px; }
    h2 {
      flex: 1;
      margin: 0;
      padding-top: 4px;
      text-align: center;
      font-size: 22px;
      font-weight: 400;
      line-height: 28px;
    }
    .search {
      display: flex;
      gap: 7px;
      margin-bottom: 14px;
    }
    .search outlined-field { flex: 1; }
    .search .button {
      gap: 6px;
      height: 40px;
      font-weight: 600;
    }
    .map {
      position: relative;
      flex: 1;
      min-height: 0;
      padding-bottom: 1px;
    }
    street-map { height: 100%; }
    .zoom {
      position: absolute;
      top: 6px;
      left: 7px;
      display: grid;
      gap: 1px;
      padding: 1px;
    }
    .zoom button {
      width: 19px;
      height: 20px;
      padding: 0;
      border: 0;
      border-radius: 2px;
      background: #fff;
      color: #555;
      font-size: 16px;
      font-weight: 700;
      line-height: 16px;
    }
    .pin {
      position: absolute;
      top: 193px;
      left: 50%;
      width: 28px;
      height: 41px;
      margin-left: -59px;
    }
    .credit {
      position: absolute;
      right: 0;
      bottom: 1px;
      padding: 0 6px 1px;
      background: rgba(255, 255, 255, 0.7);
      font-size: 12px;
      line-height: 16px;
      color: #333;
    }
    .credit a { color: #757575; text-decoration: none; }
    .confirm {
      position: absolute;
      left: 30px;
      bottom: 24px;
      display: grid;
      place-items: center;
      width: 39px;
      height: 39px;
      padding: 0;
      border: 0;
      border-radius: 50%;
      background: #2196f3;
      color: #fff;
    }
    .confirm .line { width: 16px; height: 16px; }
  `;

  render() {
    return html`<div class="shell" dir="rtl">
        <div class="brand"></div>
        <header>
          <h1>הדס בר</h1>
          <div class="language">
            <label for="language">שפה</label>
            <select id="language"><option>עברית</option></select>
            ${line("chevron")}
          </div>
          <button class="logout">${line("logout")}יציאה מהמערכת</button>
        </header>
        <nav>
          ${NAV.map(
            ([icon, label]) =>
              html`<a href="#" class=${icon === "plus" ? "active" : ""} aria-label=${label}>${solid(icon)}</a>`
          )}
        </nav>
        <div class="page">
          <main>
            <section class="card">
              <div class="fields">
                <outlined-field></outlined-field>
                <outlined-field label="שעת התחלה" value="12:00" icon="clock"></outlined-field>
                <outlined-field label="שעת סיום" value="13:00" icon="clock"></outlined-field>
                <outlined-field label="סוג קריאה" value="התקנות"></outlined-field>
                <outlined-field label="סוג טיפול" value="התקנה"></outlined-field>
                <outlined-field label="נושא" value="נושא"></outlined-field>
                <outlined-field label="תיאור" value="תאור" multiline></outlined-field>
              </div>
              <div class="form-card">טופס להתקנות התקנה</div>
              <button class="button">${line("pencil")}עריכת נספחים</button>
              <p class="hint">הקבצים יעלו מיד בסיום יצירת הקריאה</p>
              <div class="check">
                <span class="tick"><input id="other-place" type="checkbox" checked />${line("check")}</span>
                <label for="other-place">מיקום שונה מכתובת הכרטיס</label>
              </div>
              <div class="fields">
                <outlined-field label="רחוב" placeholder></outlined-field>
                <outlined-field label="מספר בית" placeholder></outlined-field>
                <outlined-field label="עיר" placeholder></outlined-field>
              </div>
              <button class="button pick">${line("marker")}בחירה על גבי מפה</button>
              <div class="save"><button class="button">${line("check")}שמירה</button></div>
            </section>
          </main>
          <div class="scrollbar"><span class="up"></span><span class="thumb"></span></div>
        </div>
      </div>
      <div class="scrim" dir="rtl">
        <div class="dialog" role="dialog" aria-labelledby="dialog-title">
          <div class="dialog-head">
            <button class="back" aria-label="חזרה">${line("arrow")}</button>
            <h2 id="dialog-title">בחירה על גבי מפה</h2>
          </div>
          <div class="search">
            <outlined-field label="חיפוש לפי כתובת" value="כיכר מרום נוה  רמת גן"></outlined-field>
            <button class="button">${line("search")}חיפוש</button>
          </div>
          <div class="map">
            <street-map></street-map>
            <div class="zoom">
              <button aria-label="הגדלה">+</button>
              <button aria-label="הקטנה">−</button>
            </div>
            <svg class="pin" viewBox="0 0 28 41" aria-hidden="true">
              <path fill-rule="evenodd" d="M14 0a14 14 0 0 1 14 14c0 9-9 15-11 24.500-.5 3.300-5.500 3.300-6 0C9 29 0 23 0 14A14 14 0 0 1 14 0zm0 7a7 7 0 1 0 0 14 7 7 0 0 0 0-14z" />
              <circle cx="14" cy="14" r="7" fill="#dddcdc" />
            </svg>
            <div class="credit">© <a href="#">OpenStreetMap</a> contributors.</div>
            <button class="confirm" aria-label="אישור">${line("check")}</button>
          </div>
        </div>
      </div>`;
  }
}
